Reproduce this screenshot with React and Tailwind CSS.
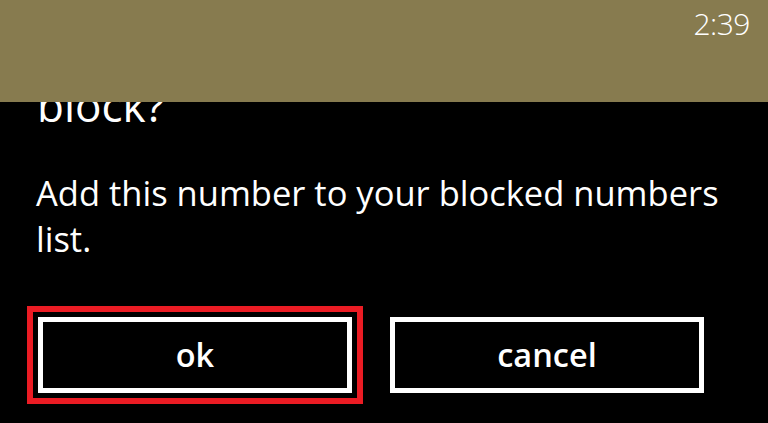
export default function App() {
  return (
    <div className="w-[768px] h-[423px] overflow-hidden bg-black text-white font-['Open_Sans',sans-serif]">
      {/* status / top band */}
      <div className="relative z-10 h-[102px] bg-[#877b4f] flex justify-end items-start pr-[18px] pt-[9px]">
        <span className="text-[30px] leading-[30px] font-light tracking-[-0.5px]">2:39</span>
      </div>

      <div className="pl-[36px] pr-[30px]">
        <h1 className="-mt-[19px] pl-[1px] text-[44px] leading-[44px] font-medium">block?</h1>
        <p className="mt-[43px] text-[34.5px] leading-[46px] font-normal">
          Add this number to your blocked numbers list.
        </p>
      </div>

      <div className="flex gap-[38px] pl-[38px] mt-[55px]">
        <button className="w-[314px] h-[76px] border-[5px] border-white outline-[6px] outline-solid outline-[#ec1c24] outline-offset-[5px] flex items-center justify-center text-[32.5px] font-semibold">
          ok
        </button>
        <button className="w-[314px] h-[76px] border-[5px] border-white flex items-center justify-center text-[32.5px] font-semibold">
          cancel
        </button>
      </div>
    </div>
  );
}
